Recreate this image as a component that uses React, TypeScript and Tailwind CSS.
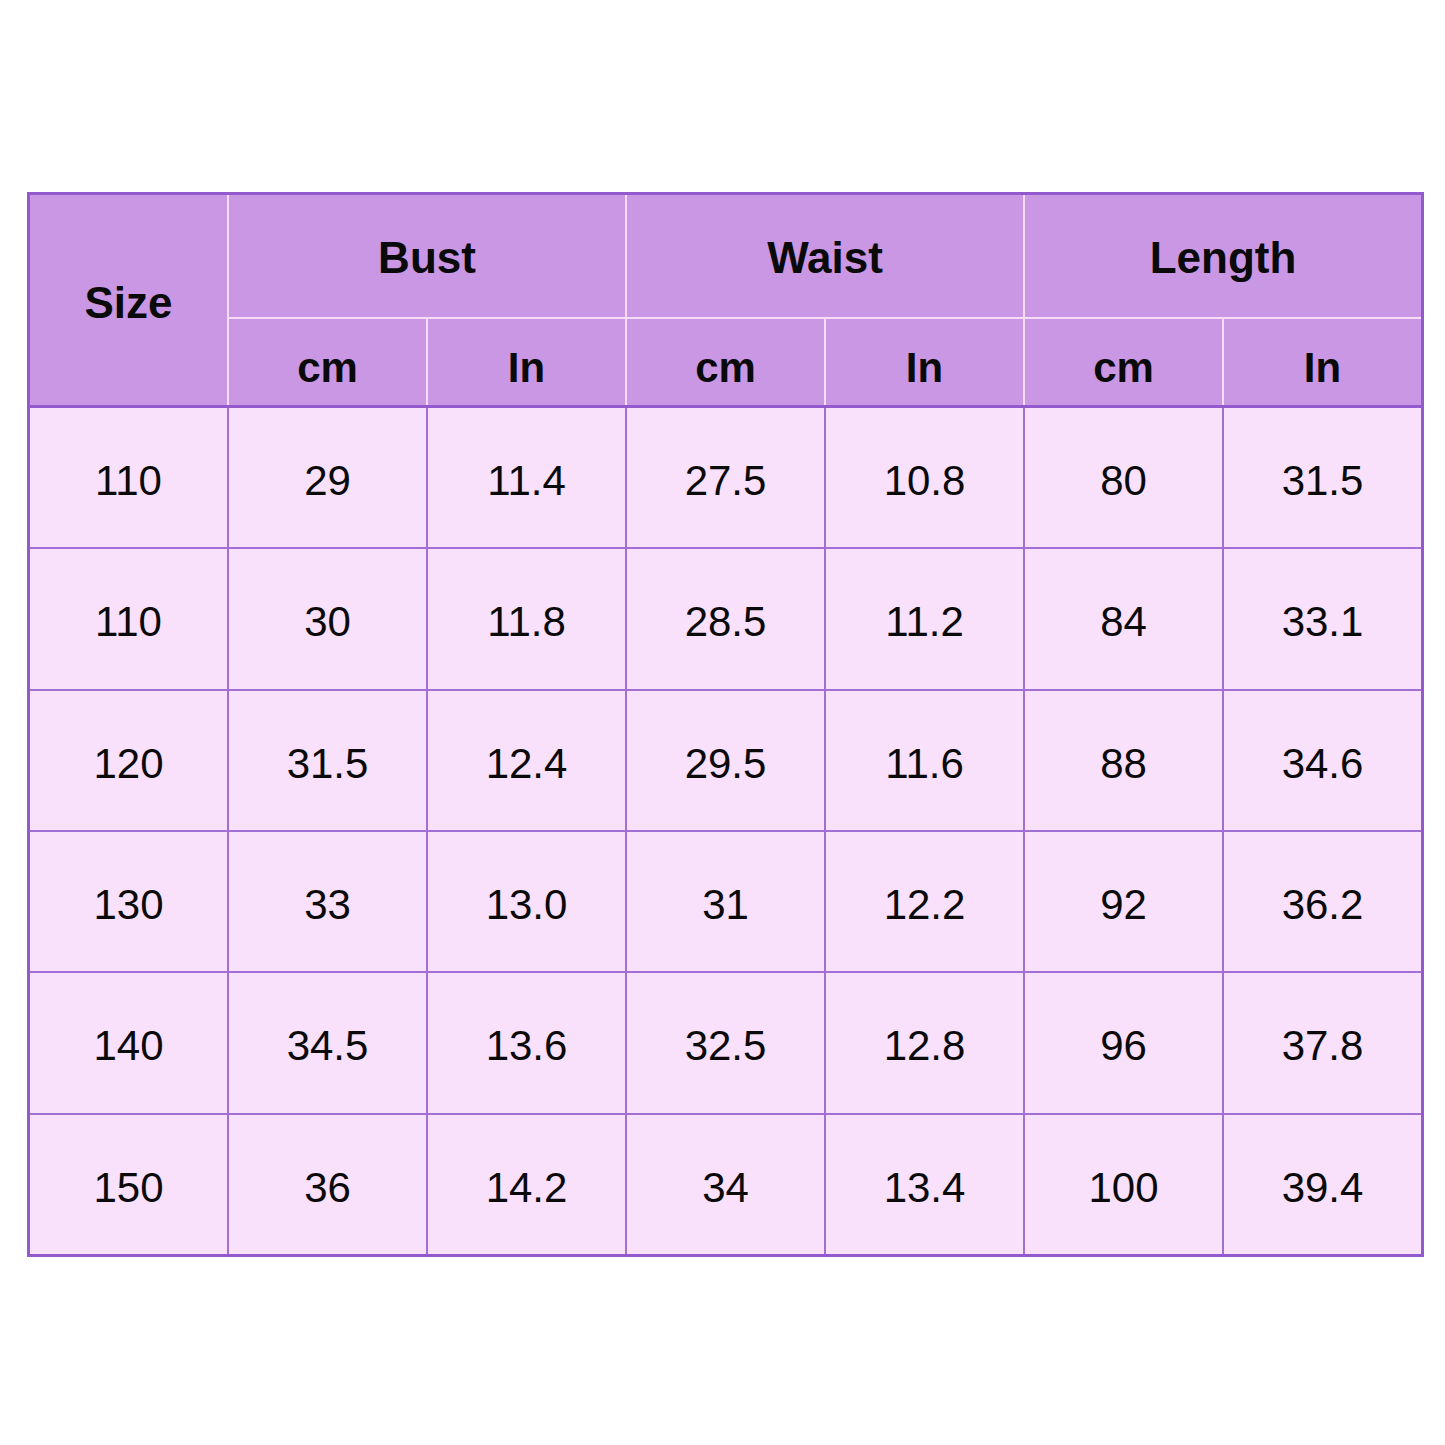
const rows = [
  ['110', '29', '11.4', '27.5', '10.8', '80', '31.5'],
  ['110', '30', '11.8', '28.5', '11.2', '84', '33.1'],
  ['120', '31.5', '12.4', '29.5', '11.6', '88', '34.6'],
  ['130', '33', '13.0', '31', '12.2', '92', '36.2'],
  ['140', '34.5', '13.6', '32.5', '12.8', '96', '37.8'],
  ['150', '36', '14.2', '34', '13.4', '100', '39.4'],
];

const groups = ['Bust', 'Waist', 'Length'];

export default function App() {
  return (
    <div className="w-[1445px] h-[1445px] bg-white pt-[192px] pl-[27px]" style={{ fontFamily: '"Liberation Sans", Arial, sans-serif' }}>
      <div className="w-[1397px] border-[3px] border-[#9459cd] text-[#0a0a0a]">
        {/* header */}
        <div className="grid grid-cols-7 grid-rows-[122px_86px] gap-[2px] bg-[#f6dcf8] text-[44px] font-bold">
          <div className="row-span-2 bg-[#c997e3] flex items-center justify-center pt-[6px]">Size</div>
          {groups.map((g) => (
            <div key={g} className="col-span-2 bg-[#c997e3] flex items-center justify-center pt-[4px]">
              {g}
            </div>
          ))}
          {groups.flatMap((g) => [
            <div key={g + 'cm'} className="bg-[#c997e3] flex items-center justify-center pt-[10px] text-[42px]">cm</div>,
            <div key={g + 'in'} className="bg-[#c997e3] flex items-center justify-center pt-[10px] text-[42px]">In</div>,
          ])}
        </div>
        {/* body */}
        <div className="grid grid-cols-7 grid-rows-6 h-[849px] gap-[2px] bg-[#a26fd4] border-t-[3px] border-[#9459cd] text-[42px]">
          {rows.flatMap((r, i) =>
            r.map((v, j) => (
              <div key={i + '-' + j} className="bg-[#f9e0fb] flex items-center justify-center pt-[6px]">
                {v}
              </div>
            ))
          )}
        </div>
      </div>
    </div>
  );
}
